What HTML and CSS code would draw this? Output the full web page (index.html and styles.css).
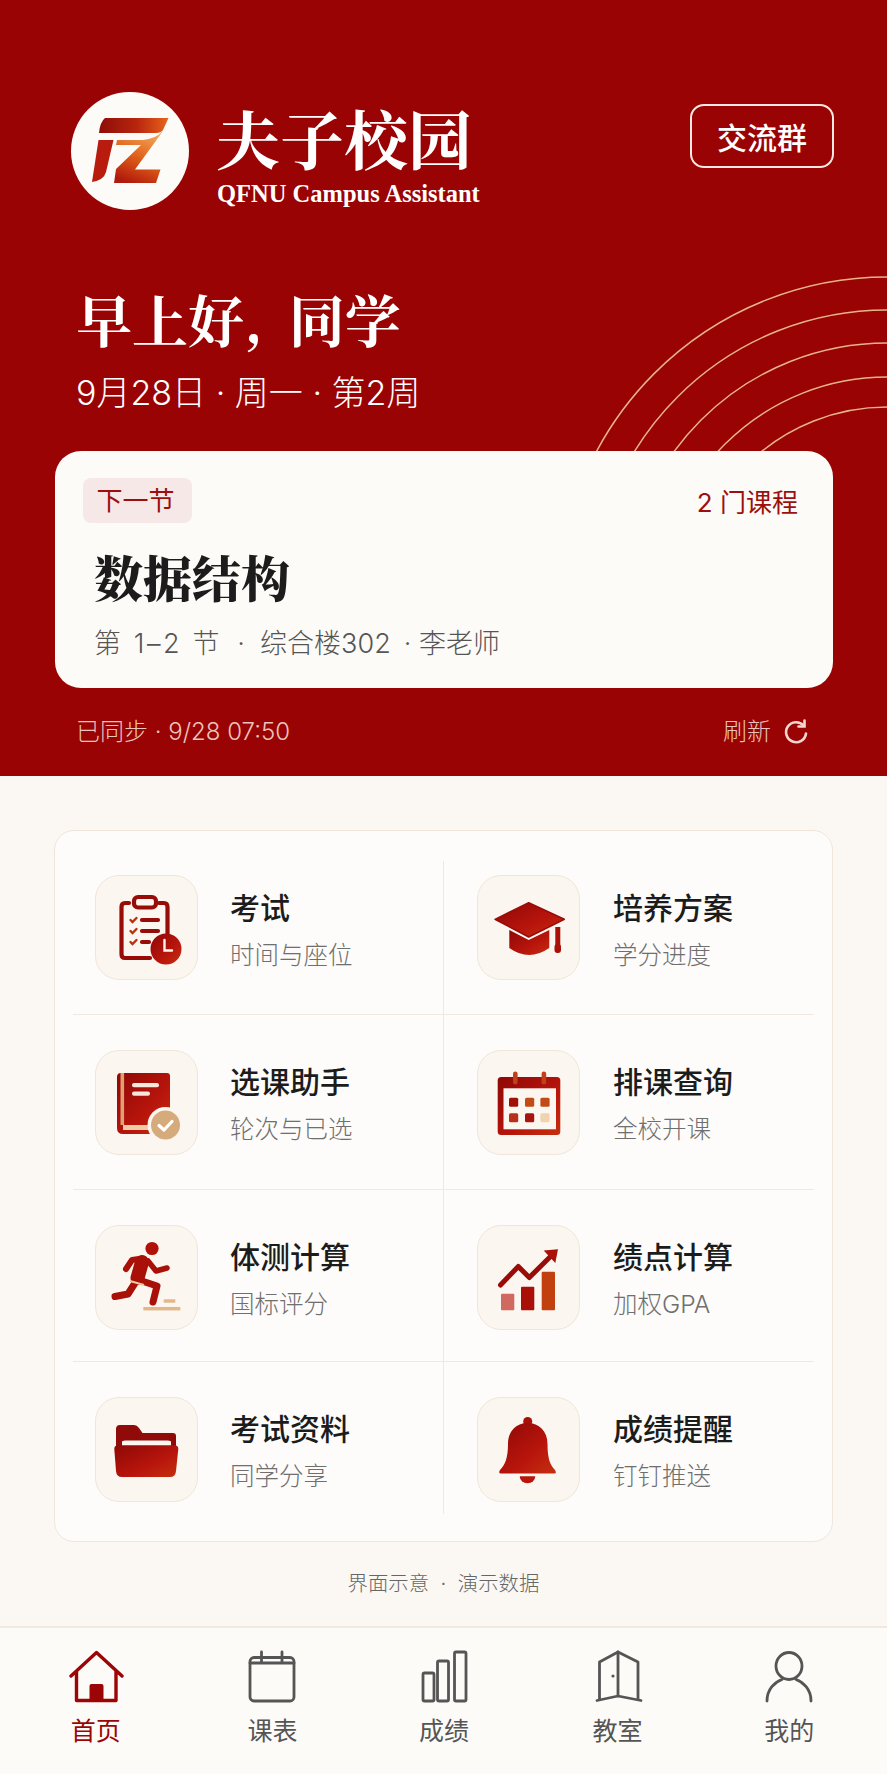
FILE: index.html
```html
<!DOCTYPE html>
<html lang="zh-CN">
<head>
    <meta charset="UTF-8">
    <meta name="viewport" content="width=device-width, initial-scale=1.0">
    <title>夫子校园</title>
    <link rel="stylesheet" href="styles.css">
</head>
<body>
    <svg class="svg-defs" aria-hidden="true">
        <defs>
            <linearGradient id="red" x1="0" y1="0" x2="1" y2="1">
                <stop offset="0" stop-color="#8e0806"/>
                <stop offset="0.6" stop-color="#b8150c"/>
                <stop offset="1" stop-color="#c5300f"/>
            </linearGradient>
            <linearGradient id="logoBar" x1="0" y1="0" x2="1" y2="0">
                <stop offset="0" stop-color="#8e0c08"/>
                <stop offset="0.55" stop-color="#b8260e"/>
                <stop offset="1" stop-color="#e8641c"/>
            </linearGradient>
            <linearGradient id="logoZ" x1="0.7" y1="0" x2="0.3" y2="1">
                <stop offset="0" stop-color="#f4a858"/>
                <stop offset="0.5" stop-color="#e0601a"/>
                <stop offset="1" stop-color="#b01a0c"/>
            </linearGradient>
        </defs>
    </svg>

    <section class="hero">
        <svg class="arcs" viewBox="0 0 330 180" fill="none" stroke="#e6b48c" stroke-width="1.5">
            <circle cx="330" cy="335" r="329"/>
            <circle cx="330" cy="335" r="296"/>
            <circle cx="330" cy="335" r="263"/>
            <circle cx="330" cy="335" r="229"/>
            <circle cx="330" cy="335" r="199"/>
        </svg>

        <header class="top">
            <div class="logo">
                <svg viewBox="0 0 118 118" width="118" height="118">
                    <circle cx="59" cy="59" r="59" fill="#fdfbf8"/>
                    <path d="M34 26H97.5L92 38Q90 41 85 41H28Q29 30 34 26Z" fill="url(#logoBar)"/>
                    <path d="M27.5 48H42.5L35 80Q33 88 21 90Z" fill="#b81c0e"/>
                    <path d="M46 48H72Q84 47 92 39L64 77.5H89.5L85 91H43L45 77L70 53H45Z" fill="url(#logoZ)"/>
                </svg>
            </div>
            <div class="brand">
                <div class="brand-name">夫子校园</div>
                <div class="brand-sub">QFNU Campus Assistant</div>
            </div>
            <button class="group-btn">交流群</button>
        </header>

        <h1 class="greeting">早上好, 同学</h1>
        <p class="date">9月28日 · 周一 · 第2周</p>

        <div class="next-card">
            <div class="next-head">
                <span class="next-tag">下一节</span>
                <span class="next-count">2 门课程</span>
            </div>
            <h2 class="next-title">数据结构</h2>
            <p class="next-info"><span class="next-range">第 1–2 节</span> &nbsp;·&nbsp; 综合楼302<span class="next-teacher">· 李老师</span></p>
        </div>

        <div class="sync">
            <span>已同步 · 9/28 07:50</span>
            <span class="refresh">刷新
                <svg viewBox="0 0 26 26" width="26" height="26" fill="none" stroke="#f0d8d0" stroke-width="2.6" stroke-linecap="round">
                    <path d="M20.5 6.5A10 10 0 1 0 23 14.5"/>
                    <path d="M21.5 1.5V7.5H15.5"/>
                </svg>
            </span>
        </div>
    </section>

    <section class="panel">
        <div class="grid">
            <a class="cell">
                <div class="tile">
                    <svg viewBox="0 0 102 104">
                        <g fill="none" stroke="#980c08" stroke-width="4.2" stroke-linecap="round">
                            <path d="M33 27H29Q25.5 27 25.5 31V78Q25.5 82 29 82H54"/>
                            <path d="M63 27H68Q71.5 27 71.5 31V59"/>
                            <rect x="38" y="21" width="22" height="10.5" rx="4"/>
                            <path d="M46 44H62M46 55H62M46 66H53"/>
                        </g>
                        <g fill="none" stroke="#b8300e" stroke-width="2.4" stroke-linecap="round">
                            <path d="M34.5 44L36.5 46L40.5 42M34.5 55L36.5 57L40.5 53M34.5 66L36.5 68L40.5 64"/>
                        </g>
                        <circle cx="70" cy="73" r="15.5" fill="url(#red)"/>
                        <path d="M68.5 64V74.5H76" fill="none" stroke="#fbf6ef" stroke-width="2.4" stroke-linecap="round"/>
                    </svg>
                </div>
                <div class="cell-text"><div class="cell-title">考试</div><div class="cell-sub">时间与座位</div></div>
            </a>
            <a class="cell">
                <div class="tile">
                    <svg viewBox="0 0 102 104">
                        <path d="M17 43.3L50.7 26.7L86.3 43.3L50.7 61Z" fill="url(#red)" stroke="#980c08" stroke-width="1.5" stroke-linejoin="round"/>
                        <path d="M31.3 54L50.7 64L71.3 54V72Q51 86 31.3 72Z" fill="url(#red)"/>
                        <rect x="77.3" y="51" width="5" height="20" fill="#a81008"/>
                        <rect x="76.5" y="68" width="6.5" height="9" rx="3" fill="#a81008"/>
                    </svg>
                </div>
                <div class="cell-text"><div class="cell-title">培养方案</div><div class="cell-sub">学分进度</div></div>
            </a>
            <a class="cell">
                <div class="tile">
                    <svg viewBox="0 0 102 104">
                        <path d="M25 22H71Q74 22 74 25V83H27Q21 83 21 77V26Q21 22 25 22Z" fill="url(#red)"/>
                        <rect x="24.5" y="22" width="3.6" height="52" fill="#e0a070"/>
                        <rect x="27" y="74" width="30" height="5" fill="#f0cba4"/>
                        <rect x="36" y="32" width="27" height="4.2" rx="2" fill="#f6e8da"/>
                        <rect x="36" y="40.5" width="18" height="4.2" rx="2" fill="#f6e8da"/>
                        <circle cx="69.5" cy="74" r="18" fill="#fbf6ef"/>
                        <circle cx="69.5" cy="74" r="14.5" fill="#d6ab7b"/>
                        <path d="M63 74.5L68 79L76 70.5" fill="none" stroke="#fff" stroke-width="3.2" stroke-linecap="round" stroke-linejoin="round"/>
                    </svg>
                </div>
                <div class="cell-text"><div class="cell-title">选课助手</div><div class="cell-sub">轮次与已选</div></div>
            </a>
            <a class="cell">
                <div class="tile">
                    <svg viewBox="0 0 102 104">
                        <rect x="19.7" y="26" width="62.6" height="58" rx="3.5" fill="url(#red)"/>
                        <rect x="25.5" y="37.3" width="52.5" height="41" fill="#fbf6ef"/>
                        <rect x="35" y="20.5" width="4.6" height="13" rx="2.3" fill="#c0401a"/>
                        <rect x="63.6" y="20.5" width="4.6" height="13" rx="2.3" fill="#c0401a"/>
                        <rect x="31" y="46.7" width="9.2" height="9" rx="1.5" fill="#a01008"/>
                        <rect x="47" y="46.7" width="9.2" height="9" rx="1.5" fill="#c24a14"/>
                        <rect x="62.4" y="46.7" width="9.2" height="9" rx="1.5" fill="#c24a14"/>
                        <rect x="31" y="62.3" width="9.2" height="9" rx="1.5" fill="#b8301a"/>
                        <rect x="47" y="62.3" width="9.2" height="9" rx="1.5" fill="#a81410"/>
                        <rect x="62.4" y="62.3" width="9.2" height="9" rx="1.5" fill="#f0d4b0"/>
                    </svg>
                </div>
                <div class="cell-text"><div class="cell-title">排课查询</div><div class="cell-sub">全校开课</div></div>
            </a>
            <a class="cell">
                <div class="tile">
                    <svg viewBox="0 0 102 104">
                        <circle cx="56" cy="22.5" r="6.6" fill="#b0120a"/>
                        <g fill="none" stroke="#a81008" stroke-linecap="round" stroke-linejoin="round">
                            <path d="M46 36L41.5 52" stroke-width="14"/>
                            <path d="M43 33L36 34L30 43" stroke-width="6"/>
                            <path d="M52 35L60 45L71 42" stroke-width="5.5"/>
                            <path d="M39 57L32 68L19 70.5" stroke-width="7"/>
                            <path d="M43 54L61 60L57 76" stroke-width="7"/>
                        </g>
                        <path d="M34 55L48 59" stroke="#eec9a2" stroke-width="2"/>
                        <rect x="67.7" y="73.3" width="11.6" height="3.4" fill="#e2b78a"/>
                        <rect x="47.3" y="81" width="37" height="3.4" fill="#e2b78a"/>
                    </svg>
                </div>
                <div class="cell-text"><div class="cell-title">体测计算</div><div class="cell-sub">国标评分</div></div>
            </a>
            <a class="cell">
                <div class="tile">
                    <svg viewBox="0 0 102 104">
                        <rect x="23" y="67.7" width="13.3" height="16.6" rx="1" fill="#d06a60"/>
                        <rect x="43" y="60.7" width="13.3" height="23.6" rx="1" fill="#a81008"/>
                        <rect x="63.7" y="45.7" width="13.3" height="38.6" rx="1" fill="#c24010"/>
                        <path d="M22.5 59L40.3 40.5L51.3 51.5L72 31" fill="none" stroke="#9a0c08" stroke-width="5" stroke-linecap="round" stroke-linejoin="round"/>
                        <path d="M65.7 24.5L80 23.3L77.3 37Z" fill="#a81008"/>
                    </svg>
                </div>
                <div class="cell-text"><div class="cell-title">绩点计算</div><div class="cell-sub">加权GPA</div></div>
            </a>
            <a class="cell">
                <div class="tile">
                    <svg viewBox="0 0 102 104">
                        <path d="M24 27H38Q41 27 43 30L46.5 35H77Q80 35 80 38V48H20V31Q20 27 24 27Z" fill="#8f0a08"/>
                        <path d="M26 44Q26 42.5 29 42.5H72Q75 42.5 75 44V48H26Z" fill="#fbf6ef"/>
                        <path d="M18.3 51Q18.3 47.3 22 47.3H78.5Q82.3 47.3 82.3 51L80 73Q79.5 79 74 79H26Q20.5 79 20 73Z" fill="url(#red)"/>
                    </svg>
                </div>
                <div class="cell-text"><div class="cell-title">考试资料</div><div class="cell-sub">同学分享</div></div>
            </a>
            <a class="cell">
                <div class="tile">
                    <svg viewBox="0 0 102 104">
                        <circle cx="49.7" cy="23.5" r="4.5" fill="#a81008"/>
                        <path d="M49.7 25C38 25 30 33 30 46C30 60 27 67 22 72Q20 75.5 23 75.5H76.5Q79 75.5 77 72C72 67 69.5 60 69.5 46C69.5 33 61 25 49.7 25Z" fill="url(#red)"/>
                        <path d="M41.7 78.3H57.3A7.8 7 0 0 1 41.7 78.3Z" fill="#b8150c"/>
                    </svg>
                </div>
                <div class="cell-text"><div class="cell-title">成绩提醒</div><div class="cell-sub">钉钉推送</div></div>
            </a>
        </div>
    </section>

    <p class="note">界面示意 &nbsp;·&nbsp; 演示数据</p>

    <nav class="tabbar">
        <a class="tab active">
            <svg viewBox="0 0 56 56" fill="none" stroke="currentColor" stroke-width="3.4" stroke-linecap="round" stroke-linejoin="round">
                <path d="M3 26L28.5 2.5L54 26M8.5 21V50.5H48V21"/>
                <rect x="21.5" y="34" width="14" height="17" rx="2" fill="currentColor" stroke="none"/>
            </svg>
            <span>首页</span>
        </a>
        <a class="tab">
            <svg viewBox="0 0 56 56" fill="none" stroke="currentColor" stroke-width="2.8" stroke-linecap="round">
                <rect x="6" y="7.5" width="44" height="43.5" rx="4"/>
                <path d="M6 13H50M17.5 2V13M38 2V13"/>
            </svg>
            <span>课表</span>
        </a>
        <a class="tab">
            <svg viewBox="0 0 56 56" fill="none" stroke="currentColor" stroke-width="2.8" stroke-linejoin="round">
                <rect x="7" y="23" width="11" height="28" rx="1.5"/>
                <rect x="21.5" y="11" width="11" height="40" rx="1.5"/>
                <rect x="38.5" y="2" width="11.5" height="49" rx="1.5"/>
            </svg>
            <span>成绩</span>
        </a>
        <a class="tab">
            <svg viewBox="0 0 56 56" fill="none" stroke="currentColor" stroke-width="2.8" stroke-linejoin="round" stroke-linecap="round">
                <path d="M9.5 49V12L28 2L48 12V49"/>
                <path d="M28 2V46"/>
                <path d="M7 50.5L28 46L51 50.5"/>
                <circle cx="23" cy="26" r="1.6" fill="currentColor" stroke="none"/>
            </svg>
            <span>教室</span>
        </a>
        <a class="tab">
            <svg viewBox="0 0 56 56" fill="none" stroke="currentColor" stroke-width="2.8" stroke-linecap="round">
                <ellipse cx="28" cy="16" rx="13" ry="13.5"/>
                <path d="M6 51C6 39 14 32 21 29.5M50 51C50 39 42 32 35 29.5"/>
            </svg>
            <span>我的</span>
        </a>
    </nav>
</body>
</html>
```

FILE: styles.css
```css
* {
    box-sizing: border-box;
}
html, body {
    margin: 0;
    padding: 0;
}
body {
    width: 887px;
    height: 1774px;
    overflow: hidden;
    background-color: #fbf8f3;
    font-family: Inter, "Noto Sans CJK SC", sans-serif;
}
h1, h2, p {
    margin: 0;
    font-weight: normal;
}
.svg-defs {
    position: absolute;
    width: 0;
    height: 0;
}

/* hero */
.hero {
    position: relative;
    height: 776px;
    padding: 92px 54px 0 55px;
    background-color: #9a0303;
    overflow: hidden;
    color: #fff;
}
.arcs {
    position: absolute;
    right: 0;
    top: 271px;
    width: 330px;
    height: 180px;
}
.top {
    position: relative;
    display: flex;
    align-items: flex-start;
    padding-left: 16px;
}
.logo {
    width: 118px;
    height: 118px;
}
.brand {
    margin-left: 27px;
    padding-top: 12px;
}
.brand-name {
    font-family: "Noto Serif CJK SC", "Noto Sans CJK SC", serif;
    font-size: 64px;
    line-height: 64px;
    font-weight: 700;
}
.brand-sub {
    margin-top: 12px;
    margin-left: 1px;
    font-family: "Liberation Serif", serif;
    font-size: 24.5px;
    line-height: 28px;
    font-weight: bold;
    white-space: nowrap;
}
.group-btn {
    margin-left: auto;
    margin-top: 12px;
    margin-right: -1px;
    width: 144px;
    height: 64px;
    padding: 0;
    background: transparent;
    border: 2px solid #fbe8e0;
    border-radius: 14px;
    color: #fff;
    font-family: inherit;
    font-size: 30px;
    font-weight: 500;
}
.greeting {
    position: relative;
    margin-top: 78px;
    padding-left: 21px;
    font-family: "Noto Serif CJK SC", "Noto Sans CJK SC", serif;
    font-size: 56px;
    line-height: 60px;
    font-weight: 700;
    word-spacing: 12px;
}
.date {
    position: relative;
    margin-top: 25px;
    padding-left: 21px;
    font-size: 34px;
    line-height: 40px;
    font-weight: 300;
}
.next-card {
    position: relative;
    margin-top: 38px;
    height: 237px;
    padding: 27px 35px 0 28px;
    background-color: #fdfbf8;
    border-radius: 26px;
    color: #1c1c1c;
}
.next-head {
    display: flex;
    justify-content: space-between;
    align-items: center;
}
.next-tag {
    width: 109px;
    height: 45px;
    padding-right: 4px;
    background-color: #f5e8e6;
    border-radius: 8px;
    color: #9c0f0f;
    font-size: 26px;
    line-height: 45px;
    text-align: center;
}
.next-count {
    color: #9c0f0f;
    font-size: 26px;
}
.next-title {
    margin-top: 25px;
    padding-left: 11px;
    font-family: "Noto Serif CJK SC", "Noto Sans CJK SC", serif;
    font-size: 49px;
    line-height: 56px;
    font-weight: 900;
}
.next-info {
    margin-top: 21px;
    padding-left: 11px;
    color: #555;
    font-size: 27px;
    line-height: 38px;
    font-weight: 300;
}
.next-range {
    letter-spacing: 2.6px;
}
.next-teacher {
    margin-left: 13px;
}
.sync {
    display: flex;
    justify-content: space-between;
    align-items: center;
    margin-top: 28px;
    padding: 0 24px 0 21px;
    color: #ecc4bc;
    font-size: 24px;
    line-height: 32px;
    font-weight: 300;
}
.refresh {
    display: flex;
    align-items: center;
    gap: 12px;
}

/* feature grid */
.panel {
    margin: 54px 54px 0 54px;
    height: 712px;
    padding: 30px 18px 0;
    background-color: #fdfcfa;
    border: 1px solid #efe6dc;
    border-radius: 20px;
}
.grid {
    display: grid;
    grid-template-columns: 371px 370px;
    grid-template-rows: 154px 175px 172px 152px;
}
.cell {
    display: flex;
    align-items: flex-start;
    gap: 33px;
    padding: 35px 0 0 33px;
    border-bottom: 1px solid #f1e8df;
}
.cell:nth-child(odd) {
    gap: 32px;
    padding-left: 22px;
    border-right: 1px solid #f1e8df;
}
.cell:nth-child(-n+2) {
    padding-top: 14px;
}
.cell:nth-last-child(-n+2) {
    border-bottom: none;
}
.tile {
    flex: none;
    width: 103px;
    height: 105px;
    background-color: #fbf6ef;
    border: 1px solid #f0e6da;
    border-radius: 24px;
}
.tile svg {
    display: block;
    width: 102px;
    height: 104px;
}
.cell-text {
    padding-top: 13px;
}
.cell:nth-child(-n+2) .cell-text {
    padding-top: 14px;
}
.cell-title {
    color: #1c1c1c;
    font-size: 30px;
    line-height: 38px;
    font-weight: 500;
}
.cell-sub {
    margin-top: 12px;
    color: #6f6f6f;
    font-size: 24.5px;
    line-height: 32px;
    font-weight: 300;
    white-space: nowrap;
}

.note {
    margin-top: 28px;
    height: 28px;
    color: #666;
    font-size: 20.4px;
    line-height: 28px;
    font-weight: 300;
    text-align: center;
}

/* tab bar */
.tabbar {
    display: flex;
    margin-top: 28px;
    height: 148px;
    padding: 22px 12px 0 10px;
    background-color: #fdfbf8;
    border-top: 2px solid #f1e8df;
}
.tab {
    display: flex;
    flex-direction: column;
    align-items: center;
    flex: 1;
    color: #555;
    font-size: 25px;
    font-weight: 400;
}
.tab:nth-child(2) {
    padding-left: 5px;
}
.tab:nth-child(4) {
    padding-left: 2px;
}
.tab svg {
    width: 56px;
    height: 56px;
}
.tab span {
    margin-top: 9px;
    line-height: 32px;
}
.tab.active {
    color: #9c0505;
}
```
